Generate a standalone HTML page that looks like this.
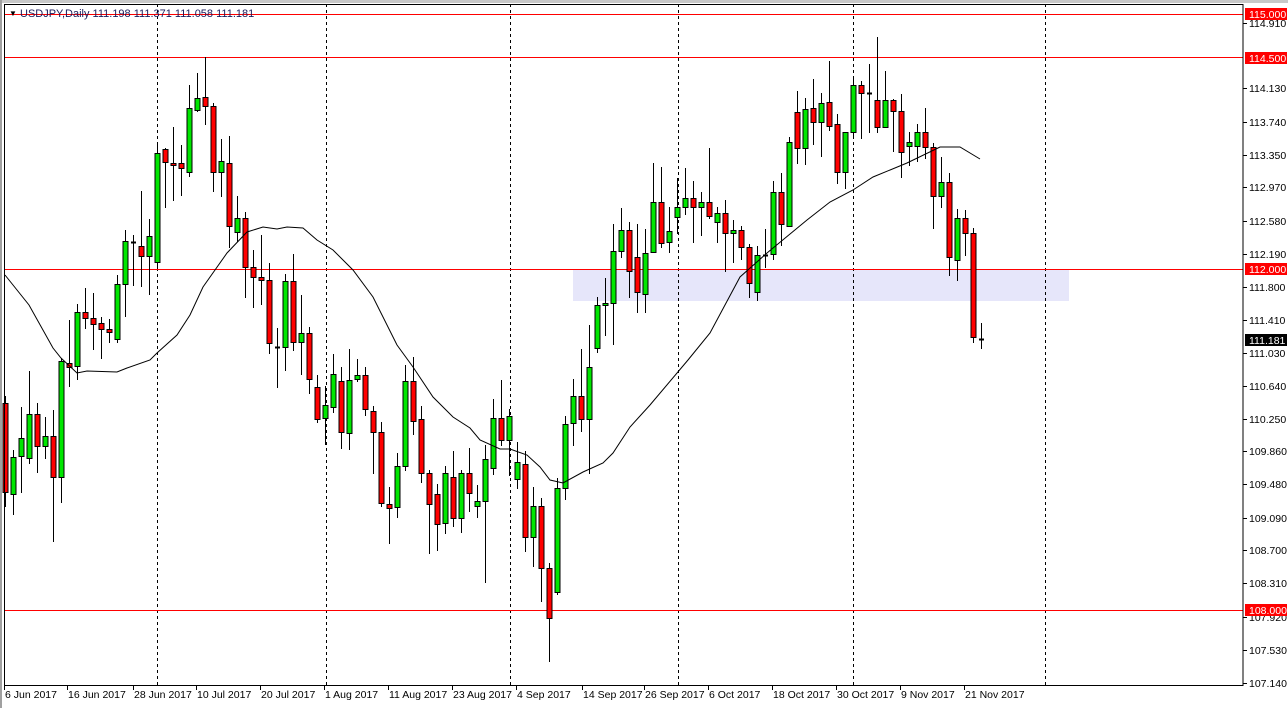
<!DOCTYPE html>
<html><head><meta charset="utf-8">
<style>
html,body{margin:0;padding:0;background:#fff;width:1288px;height:708px;overflow:hidden}
svg{display:block}
text{font-family:"Liberation Sans",sans-serif;font-size:10.5px}
</style></head><body>
<svg id="s" width="1288" height="708" xmlns="http://www.w3.org/2000/svg">
<rect x="0" y="0" width="1288" height="708" fill="#fff"/>
<rect x="0" y="0" width="1288" height="3" fill="#c8c8c8"/>
<rect x="0" y="0" width="2" height="708" fill="#a0a0a0"/>
<rect x="573" y="269" width="496" height="32" fill="#e6e6fa"/>
<g id="grid" stroke="#000" stroke-dasharray="3,3" stroke-width="1">
<line x1="157.5" y1="4" x2="157.5" y2="685"/>
<line x1="326.5" y1="4" x2="326.5" y2="685"/>
<line x1="510.5" y1="4" x2="510.5" y2="685"/>
<line x1="678.5" y1="4" x2="678.5" y2="685"/>
<line x1="853.5" y1="4" x2="853.5" y2="685"/>
<line x1="1045.5" y1="4" x2="1045.5" y2="685"/>
</g>
<g stroke="#f00" stroke-width="1">
<line x1="4" y1="14.5" x2="1243" y2="14.5"/>
<line x1="4" y1="57.5" x2="1243" y2="57.5"/>
<line x1="4" y1="269.5" x2="1243" y2="269.5"/>
<line x1="4" y1="610.5" x2="1243" y2="610.5"/>
</g>
<g id="c"></g>
<polyline fill="none" stroke="#000" stroke-width="1" points="5,275 29,305 53,348 61,358 77,373 87,371 117,372 127,368 150,360 157,353 177,335 190,315 203,287 227,253 247,232 263,227 277,229 287,227 303,228 317,240 333,250 353,270 373,297 397,345 413,367 433,397 453,417 470,428 480,440 500,449 510,449 527,455 540,467 550,480 563,483 583,472 603,463 613,453 630,427 650,405 688,360 710,333 740,277 767,253 807,220 830,202 853,190 873,177 907,163 940,147 960,147 980,159"/>
<rect x="4.5" y="4.5" width="1238.5" height="681" fill="none" stroke="#000" stroke-width="1"/>
<text x="9" y="16" fill="#000" style="font-size:8px">▼</text>
<text x="20" y="17" fill="#1a1a5a" style="font-size:11px">USDJPY,Daily  111.198 111.371 111.058 111.181</text>
<g id="ax"></g>
</svg>
<script>
var d=[
['r',403,492,396,507],['g',457,494,450,515],['g',438,456,407,493],['g',414,458,371,464],['r',414,446,403,473],['g',436,446,417,459],['r',436,477,410,542],['g',361,477,358,503],['r',363,367,320,387],['g',312,366,304,380],
['r',312,318,288,329],['r',318,324,293,350],['r',323,329,317,359],['r',329,332,319,343],['g',284,339,275,343],['g',241,284,230,317],['d',242,242,235,286],['r',246,256,191,287],['g',236,256,219,295],['g',153,262,142,269],
['r',149,162,148,208],['r',163,164,127,201],['r',163,168,145,196],['g',108,172,85,177],['g',98,110,73,112],['r',97,106,57,125],['r',106,172,103,192],['g',161,172,139,197],['r',163,226,136,248],['g',218,232,196,242],
['r',218,267,212,298],['r',267,277,250,308],['r',277,280,235,305],['r',280,343,263,354],['d',347,347,328,388],['g',281,347,274,371],['r',281,342,254,351],['g',333,342,295,375],['r',333,379,327,394],['r',387,419,375,423],
['g',405,418,386,445],['g',374,407,354,413],['r',381,432,367,449],['g',380,433,349,450],['g',375,379,359,382],['r',375,409,367,416],['r',411,432,406,474],['r',432,503,422,507],['r',504,508,487,544],['g',466,507,453,518],
['g',381,466,365,471],['r',381,421,357,435],['r',419,473,406,483],['r',473,504,470,554],['r',494,524,484,551],['g',473,523,466,534],['r',477,518,451,527],['g',473,518,470,533],['r',473,493,448,512],['g',501,506,485,518],
['g',459,501,445,583],['g',418,468,399,475],['r',418,440,380,446],['g',416,440,409,476],['g',462,479,442,489],['r',464,537,451,552],['g',506,537,487,567],['r',506,568,498,602],['r',568,618,563,662],['g',488,592,478,595],
['g',424,488,416,500],['g',396,423,379,446],['r',396,419,349,432],['g',367,419,325,474],['g',305,348,297,353],['g',303,305,278,336],['g',251,303,224,345],['g',230,251,208,258],['r',230,271,222,298],['r',257,292,224,313],
['g',253,294,229,313],['g',202,252,163,252],['r',202,243,167,248],['g',231,242,207,253],['g',207,217,178,234],['g',198,207,168,215],['r',198,207,181,243],['g',202,207,192,236],['r',202,216,148,219],['g',213,222,207,243],
['r',213,233,200,272],['g',230,233,220,263],['r',230,247,226,260],['r',247,283,244,298],['g',255,292,246,301],['d',255,255,229,268],['g',192,254,181,260],['r',192,224,173,246],['g',142,226,137,226],['r',112,148,91,164],
['g',109,148,98,165],['r',108,122,79,145],['g',103,122,93,157],['r',102,126,61,131],['r',124,172,114,184],['g',132,172,132,189],['g',85,132,77,139],['r',85,93,81,139],['d',93,93,64,133],['r',100,127,37,133],
['g',100,127,71,127],['r',100,111,99,152],['r',111,152,94,178],['g',142,146,132,166],['g',132,146,124,162],['r',132,147,108,159],['r',147,196,143,229],['g',182,196,157,208],['r',182,257,173,276],['g',218,260,209,281],
['r',218,233,210,256],['r',233,337,228,343],['d',339,339,323,349]];
var h='';
d.forEach(function(c,i){var x=5+8*i;
h+='<line x1="'+(x+.5)+'" y1="'+c[3]+'" x2="'+(x+.5)+'" y2="'+c[4]+'" stroke="#000"/>';
if(c[0]=='d'){h+='<line x1="'+(x-2)+'" y1="'+(c[1]+.5)+'" x2="'+(x+3)+'" y2="'+(c[1]+.5)+'" stroke="#000" stroke-width="2"/>';}
else{var hh=Math.max(c[2]-c[1],2);h+='<rect x="'+(x-2)+'" y="'+(c[1]+.5)+'" width="5" height="'+hh+'" fill="'+(c[0]=='g'?'#00e600':'#f00')+'" stroke="#000"/>';}
});
document.getElementById('c').innerHTML=h;
var a='';
[['114.910',23],['114.130',88],['113.740',122],['113.350',155],['112.970',187],['112.580',221],['112.190',254],['111.800',287],['111.410',320],['111.030',353],['110.640',386],['110.250',419],['109.860',451],['109.480',484],['109.090',518],['108.700',550],['108.310',583],['107.920',617],['107.530',650],['107.140',683]].forEach(function(p){
a+='<line x1="1243" y1="'+(p[1]+.5)+'" x2="1247" y2="'+(p[1]+.5)+'" stroke="#000"/><text x="1249" y="'+(p[1]+4)+'" fill="#000">'+p[0]+'</text>';});
[['115.000',14,'#f00','#fff'],['114.500',58,'#f00','#fff'],['112.000',269,'#f00','#fff'],['108.000',610,'#f00','#fff'],['111.181',340,'#000','#fff']].forEach(function(p){
a+='<rect x="1245" y="'+(p[1]-6)+'" width="42" height="12" fill="'+p[2]+'"/><text x="1249" y="'+(p[1]+4)+'" fill="'+p[3]+'">'+p[0]+'</text>';});
[['6 Jun 2017',4],['16 Jun 2017',67],['28 Jun 2017',133],['10 Jul 2017',196],['20 Jul 2017',260],['1 Aug 2017',324],['11 Aug 2017',388],['23 Aug 2017',452],['4 Sep 2017',516],['14 Sep 2017',582],['26 Sep 2017',644],['6 Oct 2017',708],['18 Oct 2017',772],['30 Oct 2017',836],['9 Nov 2017',900],['21 Nov 2017',964]].forEach(function(p){
a+='<line x1="'+(p[1]+.5)+'" y1="686" x2="'+(p[1]+.5)+'" y2="690" stroke="#000"/><text x="'+(p[1]+1)+'" y="698" fill="#000">'+p[0]+'</text>';});
document.getElementById('ax').innerHTML=a;
</script>
</body></html>
